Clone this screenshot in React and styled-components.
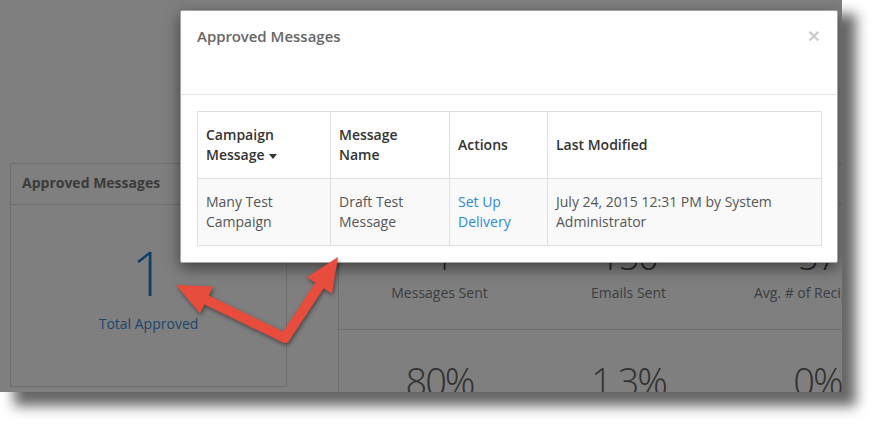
import React from 'react'
import styled, { createGlobalStyle } from 'styled-components'

const GlobalStyle = createGlobalStyle`
  body {
    margin: 0;
    background: #ffffff;
    font-family: 'Open Sans', 'Liberation Sans', sans-serif;
  }
`

const semibold = `'Open Sans SemiBold', 'Open Sans', 'Liberation Sans', sans-serif`
const light = `'Open Sans Light', 'Open Sans', 'Liberation Sans', sans-serif`

const Page = styled.div`
  width: 882px;
  height: 432px;
  background: #ffffff;
`

const Screen = styled.div`
  position: relative;
  width: 842px;
  height: 392px;
  overflow: hidden;
  background: #ffffff;
  box-shadow: 14px 14px 12px rgba(0, 0, 0, 0.6);
`

const Dashboard = styled.div`
  display: flex;
  align-items: flex-start;
  gap: 51px;
  padding: 163px 0 0 10px;
`

const Panel = styled.section`
  flex: none;
  box-sizing: border-box;
  width: ${p => p.$width}px;
  height: ${p => p.$height}px;
  border: 1px solid #dcdcdc;
  display: flex;
  flex-direction: column;
`

const PanelHeader = styled.div`
  height: 41px;
  box-sizing: border-box;
  padding: 0 0 4px 11px;
  border-bottom: 1px solid #dcdcdc;
  display: flex;
  align-items: center;
  font-size: 14px;
  font-weight: 700;
  color: #777777;
`

const TotalBox = styled.div`
  padding-top: 38px;
  display: flex;
  flex-direction: column;
  align-items: center;
`

const BigNumber = styled.div`
  font-family: ${light};
  font-size: ${p => p.$size || 60}px;
  line-height: ${p => p.$size || 60}px;
  letter-spacing: ${p => p.$tight || 0}px;
  font-weight: 300;
  color: ${p => p.$color || '#555555'};
  white-space: nowrap;
`

const Caption = styled.div`
  margin-top: ${p => p.$gap || 0}px;
  font-size: 14px;
  line-height: 20px;
  color: ${p => p.$color || '#747c84'};
  white-space: nowrap;
`

const StatsRow = styled.div`
  display: grid;
  grid-template-columns: repeat(3, 189px);
  padding: ${p => p.$top}px 0 ${p => p.$bottom}px 6px;
  border-bottom: ${p => (p.$divider ? '1px solid #dcdcdc' : 'none')};
`

const Stat = styled.div`
  display: flex;
  flex-direction: column;
  align-items: center;
`

const Backdrop = styled.div`
  position: absolute;
  inset: 0;
  background: rgba(0, 0, 0, 0.5);
`

const Modal = styled.div`
  position: absolute;
  left: 180px;
  top: 10px;
  width: 658px;
  box-sizing: border-box;
  background: #ffffff;
  border: 1px solid rgba(0, 0, 0, 0.35);
  border-radius: 2px;
  box-shadow: 0 5px 15px rgba(0, 0, 0, 0.5);
`

const ModalHeader = styled.div`
  height: 84px;
  box-sizing: border-box;
  padding: 15px 17px 0 16px;
  border-bottom: 1px solid #e5e5e5;
  display: flex;
  justify-content: space-between;
  align-items: flex-start;
`

const ModalTitle = styled.h4`
  margin: 0;
  font-family: ${semibold};
  font-size: 15px;
  line-height: 20px;
  font-weight: 600;
  color: #666666;
`

const Close = styled.button`
  padding: 0;
  border: 0;
  background: none;
  font-family: 'Liberation Sans', sans-serif;
  font-size: 21px;
  line-height: 20px;
  font-weight: 700;
  color: #000000;
  opacity: 0.2;
`

const ModalBody = styled.div`
  padding: 16px 15px 16px 16px;
`

const Table = styled.table`
  width: 100%;
  table-layout: fixed;
  border-collapse: collapse;
  border: 1px solid #e0e0e0;
  font-size: 14px;
  line-height: 20px;
`

const Th = styled.th`
  padding: 13px 8px;
  border: 1px solid #e0e0e0;
  text-align: left;
  vertical-align: middle;
  font-family: ${semibold};
  font-weight: 600;
  color: #333333;
`

const Td = styled.td`
  padding: 13px 8px;
  border: 1px solid #e0e0e0;
  vertical-align: top;
  background: #f9f9f9;
  color: #555555;
`

const LinkText = styled.a`
  color: #2d8ad6;
  text-decoration: none;
`

const Caret = styled.span`
  display: inline-block;
  margin-left: 4px;
  vertical-align: middle;
  border-top: 5px solid #333333;
  border-left: 4px solid transparent;
  border-right: 4px solid transparent;
`

const Arrows = styled.svg`
  position: absolute;
  left: 0;
  top: 0;
  pointer-events: none;
  filter: drop-shadow(1px 2px 2px rgba(0, 0, 0, 0.45));
`

const stats = [
  { value: '4', label: 'Messages Sent' },
  { value: '150', label: 'Emails Sent' },
  { value: '57', label: 'Avg. # of Recipients' }
]

const rates = ['80%', '1.3%', '0%']

const App = () => (
  <>
    <GlobalStyle />
    <Page>
      <Screen>
        <Dashboard>
          <Panel $width={277} $height={224}>
            <PanelHeader>Approved Messages</PanelHeader>
            <TotalBox>
              <BigNumber $color="#1f7ecb">1</BigNumber>
              <Caption $gap={11} $color="#3d8bd8">Total Approved</Caption>
            </TotalBox>
          </Panel>
          <Panel $width={600} $height={300}>
            <PanelHeader />
            <StatsRow $top={34} $bottom={26} $divider>
              {stats.map(s => (
                <Stat key={s.label}>
                  <BigNumber $size={36} $tight={-1} $color="#4a4f56">
                    {s.value}
                  </BigNumber>
                  <Caption $gap={8}>{s.label}</Caption>
                </Stat>
              ))}
            </StatsRow>
            <StatsRow $top={32} $bottom={0}>
              {rates.map(r => (
                <Stat key={r}>
                  <BigNumber $size={38} $tight={-2} $color="#666666">
                    {r}
                  </BigNumber>
                </Stat>
              ))}
            </StatsRow>
          </Panel>
        </Dashboard>

        <Backdrop />

        <Modal>
          <ModalHeader>
            <ModalTitle>Approved Messages</ModalTitle>
            <Close>×</Close>
          </ModalHeader>
          <ModalBody>
            <Table>
              <colgroup>
                <col style={{ width: 133 }} />
                <col style={{ width: 119 }} />
                <col style={{ width: 98 }} />
                <col />
              </colgroup>
              <thead>
                <tr>
                  <Th>
                    Campaign Message
                    <Caret />
                  </Th>
                  <Th>Message Name</Th>
                  <Th>Actions</Th>
                  <Th>Last Modified</Th>
                </tr>
              </thead>
              <tbody>
                <tr>
                  <Td>Many Test Campaign</Td>
                  <Td>Draft Test Message</Td>
                  <Td>
                    <LinkText href="#">Set Up Delivery</LinkText>
                  </Td>
                  <Td>July 24, 2015 12:31 PM by System Administrator</Td>
                </tr>
              </tbody>
            </Table>
          </ModalBody>
        </Modal>

        <Arrows width="842" height="392" viewBox="0 0 842 392">
          <path
            d="M206.6 299.9 L285 338 L319.4 285.5"
            fill="none"
            stroke="#e74c3c"
            strokeWidth="10"
            strokeLinejoin="round"
            strokeLinecap="round"
          />
          <polygon points="176,285 213.2,286.4 200,313.4" fill="#e74c3c" />
          <polygon points="338,257 332,293.7 306.9,277.3" fill="#e74c3c" />
        </Arrows>
      </Screen>
    </Page>
  </>
)

export default App
